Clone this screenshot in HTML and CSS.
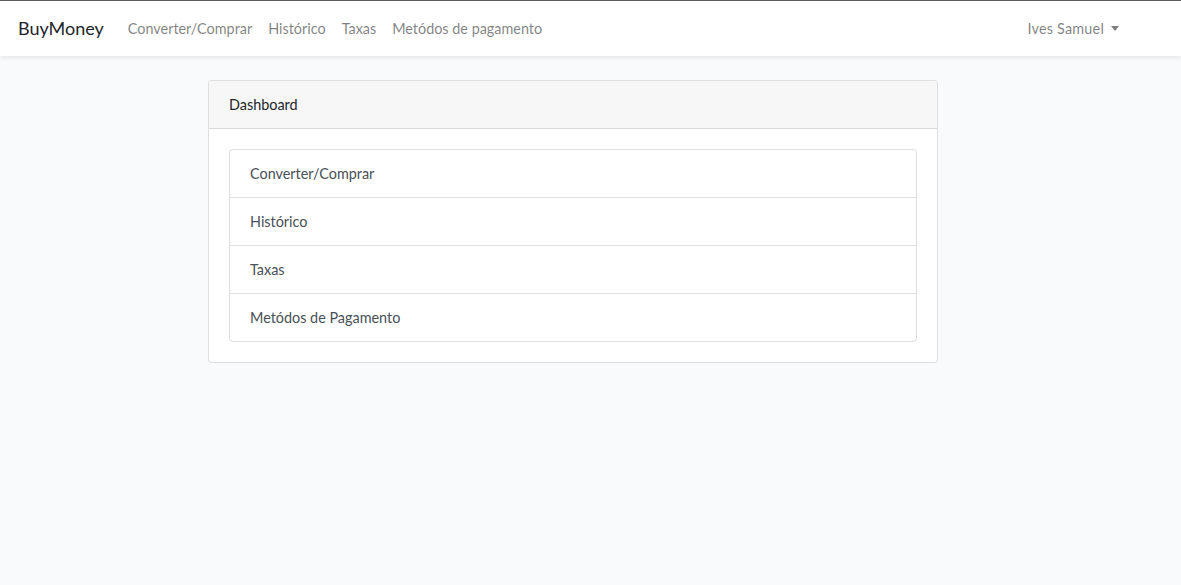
FILE: index.html
```html
<!DOCTYPE html>
<html lang="pt">
<head>
<meta charset="utf-8">
<title>BuyMoney</title>
<link rel="stylesheet" href="styles.css">
</head>
<body>
<nav class="navbar">
  <a class="brand" href="#">BuyMoney</a>
  <ul class="nav-links">
    <li><a href="#">Converter/Comprar</a></li>
    <li><a href="#">Histórico</a></li>
    <li><a href="#">Taxas</a></li>
    <li><a href="#">Metódos de pagamento</a></li>
  </ul>
  <div class="nav-right">
    <a href="#" class="user">Ives Samuel<span class="caret"></span></a>
  </div>
</nav>
<main class="main">
  <div class="card">
    <div class="card-header">Dashboard</div>
    <div class="card-body">
      <div class="list-group">
        <a href="#" class="list-item">Converter/Comprar</a>
        <a href="#" class="list-item">Histórico</a>
        <a href="#" class="list-item">Taxas</a>
        <a href="#" class="list-item">Metódos de Pagamento</a>
      </div>
    </div>
  </div>
</main>
</body>
</html>
```
FILE: styles.css
```css
* { box-sizing: border-box; }
html, body { margin: 0; padding: 0; }
body {
  background: #f8fafc;
  font-family: Lato, "Noto Sans", sans-serif;
  font-size: 14.4px;
  line-height: 1.6;
  color: #212529;
  min-height: 585px;
}
a { text-decoration: none; }
.navbar {
  display: flex;
  align-items: center;
  height: 56px;
  background: #fff;
  border-top: 1px solid #5e5e5e;
  padding: 0 54px 0 18px;
  box-shadow: 0 2px 4px rgba(0,0,0,.075);
  position: relative;
}
.brand {
  font-size: 18px;
  color: #212529;
  margin-right: 16px;
  line-height: 1.6;
}
.nav-links {
  display: flex;
  list-style: none;
  margin: 0;
  padding: 0;
}
.nav-links a, .user {
  display: block;
  padding: 8px;
  color: rgba(0,0,0,.5);
}
.user { padding-left: 6px; letter-spacing: 0.2px; }
.nav-right { margin-left: auto; }
.caret {
  display: inline-block;
  margin-left: 7px;
  vertical-align: 3px;
  border-top: 5px solid rgba(0,0,0,.5);
  border-left: 4.5px solid transparent;
  border-right: 4.5px solid transparent;
}
.main { padding-top: 24px; }
.card {
  margin-left: 208px;
  width: 730px;
  background: #fff;
  border: 1px solid rgba(0,0,0,.125);
  border-radius: 4px;
}
.card-header {
  background: #f7f7f7;
  padding: 12px 20px;
  border-bottom: 1px solid rgba(0,0,0,.125);
  border-radius: 3px 3px 0 0;
  line-height: 23px;
}
.card-body { padding: 20px; }
.list-group {
  display: flex;
  flex-direction: column;
  border: 1px solid rgba(0,0,0,.125);
  border-radius: 4px;
}
.list-item {
  display: block;
  padding: 12px 20px;
  line-height: 23px;
  color: #495057;
  border-top: 1px solid rgba(0,0,0,.125);
}
.list-item:first-child { border-top: 0; }
```
